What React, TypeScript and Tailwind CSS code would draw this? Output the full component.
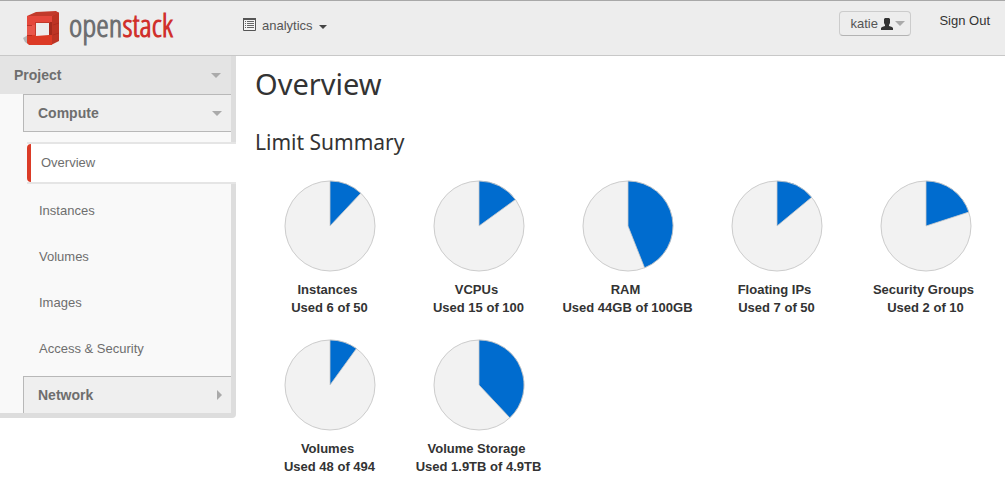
import React from "react";

type Quota = { name: string; used: string; fraction: number };

const quotas: Quota[] = [
  { name: "Instances", used: "Used 6 of 50", fraction: 0.12 },
  { name: "VCPUs", used: "Used 15 of 100", fraction: 0.15 },
  { name: "RAM", used: "Used 44GB of 100GB", fraction: 0.44 },
  { name: "Floating IPs", used: "Used 7 of 50", fraction: 0.14 },
  { name: "Security Groups", used: "Used 2 of 10", fraction: 0.2 },
  { name: "Volumes", used: "Used 48 of 494", fraction: 0.1 },
  { name: "Volume Storage", used: "Used 1.9TB of 4.9TB", fraction: 0.38 },
];

const links = ["Instances", "Volumes", "Images", "Access & Security"];

function Pie({ fraction }: { fraction: number }) {
  const cx = 75;
  const cy = 46;
  const r = 45;
  const angle = fraction * 2 * Math.PI;
  const x = cx + r * Math.sin(angle);
  const y = cy - r * Math.cos(angle);
  return (
    <svg className="block h-[92px] w-full" viewBox="0 0 145 92" aria-hidden="true">
      <circle cx={cx} cy={cy} r={r} fill="#f2f2f2" stroke="#ccc" />
      <path
        d={`M${cx} ${cy}V${cy - r}A${r} ${r} 0 ${fraction > 0.5 ? 1 : 0} 1 ${x} ${y}Z`}
        fill="#006ccf"
        stroke="#ccc"
        strokeWidth="0.8"
      />
    </svg>
  );
}

function DownArrow({ className }: { className: string }) {
  return (
    <svg className={className} viewBox="0 0 10 5" fill="currentColor" aria-hidden="true">
      <path d="M0 0H10L5 5Z" />
    </svg>
  );
}

function Logo() {
  return (
    <a href="#" className="flex items-start gap-2" aria-label="openstack">
      <svg className="h-9 w-[38px]" viewBox="0 0 38 36" aria-hidden="true">
        <path d="M0 28L5 25V34L2 32Z" fill="#b5b5b5" />
        <path d="M28 6L35 2L36 3V31L28 35Z" fill="#bd3424" />
        <path d="M4 6L13 2L33 1L36 3L29 6Z" fill="#c23a2b" />
        <path d="M4 6H29V15H4Z" fill="#e5473b" />
        <path d="M4 15H29V25H4Z" fill="#e9564a" />
        <path d="M4 25H29V35H6L4 33Z" fill="#dc3a25" />
        <path d="M26 12H29V25H26Z" fill="#a52a1d" />
        <path d="M12 12H27V13H13V25H12Z" fill="#c23a2b" />
        <path d="M13 13H26V25L13 26Z" fill="#ededed" />
        <path d="M4 15.5H9M4 25.5H9M30 15L36 13M30 25L36 23" fill="none" stroke="#a8281c" strokeOpacity="0.7" />
      </svg>
      <span className="font-['Open_Sans_Condensed_Light','Open_Sans_Condensed','Lato',sans-serif] text-[32px] leading-[30px] font-bold text-[#6d6f71]">
        open<span className="text-[#d0302b]">stack</span>
      </span>
    </a>
  );
}

export default function App() {
  return (
    <div className="min-h-screen bg-white font-['Liberation_Sans',Arial,sans-serif] text-[13px] leading-[18px] text-[#333]">
      <header className="flex h-14 items-start border-t border-b border-t-[#a8a8a8] border-b-[#c8c8c8] bg-[#ededed]">
        <div className="w-[243px] pt-[9px] pl-[23px]">
          <Logo />
        </div>
        <button type="button" className="mt-4 flex items-center text-[#555]">
          <svg className="mr-[6px] mb-[3px] h-[13px] w-[13px]" viewBox="0 0 13 13" aria-hidden="true">
            <path d="M.5 .5H12.5V12.5H.5Z" fill="#f4f4f4" stroke="#555" />
            <path d="M0 0H13V2H0Z" fill="#555" />
            <path d="M2 3.5H3M4 3.5H11M2 5.5H3M4 5.5H11M2 7.5H3M4 7.5H11M2 9.5H3M4 9.5H11" stroke="#666" />
          </svg>
          analytics
          <DownArrow className="mt-[2px] ml-[6px] h-1 w-2 text-[#444]" />
        </button>
        <button
          type="button"
          className="mt-[10px] mr-7 ml-auto flex h-[25px] w-[72px] items-center rounded border border-[#ccc] border-b-[#b3b3b3] pl-[10px] text-[#555]"
        >
          katie
          <svg className="ml-[3px] h-3 w-3" viewBox="0 0 12 12" fill="#333" aria-hidden="true">
            <path d="M4 0H8L9 1V5L8 7V8L11 9L12 10V12H0V10L1 9L4 8V7L3 5V1Z" />
          </svg>
          <DownArrow className="ml-[2px] h-[5px] w-[10px] text-[#aaa]" />
        </button>
        <a href="#" className="mt-[11px] mr-[15px] text-[#333]">
          Sign Out
        </a>
      </header>
      <div className="flex items-start">
        <nav className="w-[236px] shrink-0 rounded-br border-b-[5px] border-[#ddd] bg-[#f9f9f9] text-[#6e6e6e]">
          <div className="border-r-[5px] border-[#ddd]">
            <button
              type="button"
              className="flex h-[38px] w-full items-center justify-between bg-[#e4e4e4] pr-[10px] pl-[14px] text-sm font-bold"
            >
              Project
              <DownArrow className="h-[5px] w-[10px] text-[#aaa]" />
            </button>
            <div className="pb-[10px] pl-[23px]">
              <button
                type="button"
                className="flex h-[38px] w-full items-center justify-between border border-r-0 border-[#b8b8b8] bg-[#efefef] pr-[9px] pl-[14px] text-sm font-bold"
              >
                Compute
                <DownArrow className="h-[5px] w-[10px] text-[#aaa]" />
              </button>
            </div>
          </div>
          <a
            href="#"
            aria-current="page"
            className="ml-[27px] flex h-[42px] items-stretch border-y-2 border-[#e5e5e5] bg-white"
          >
            <span className="w-1 rounded-l bg-[#db3b27]" />
            <span className="self-center pl-[10px]">Overview</span>
          </a>
          <div className="border-r-[5px] border-[#ddd] pt-1 pl-[23px]">
            {links.map((link) => (
              <a key={link} href="#" className="flex h-[46px] items-center pl-4">
                {link}
              </a>
            ))}
            <button
              type="button"
              className="mt-1 flex h-[37px] w-full items-center justify-between border-t border-l border-[#b8b8b8] bg-[#efefef] pr-[9px] pl-[14px] text-sm font-bold"
            >
              Network
              <svg className="h-[10px] w-[5px]" viewBox="0 0 5 10" fill="#aaa" aria-hidden="true">
                <path d="M0 0V10L5 5Z" />
              </svg>
            </button>
          </div>
        </nav>
        <main className="min-w-0 flex-1 pt-2 pl-[19px] pb-2">
          <h1 className="font-['Noto_Sans',sans-serif] text-[29px] leading-10">Overview</h1>
          <h2 className="mt-5 font-['Noto_Sans',sans-serif] text-[21px] leading-9">Limit Summary</h2>
          <ul className="mt-5 flex flex-wrap gap-x-1 gap-y-[22px]">
            {quotas.map((quota) => (
              <li key={quota.name} className="w-[145px] text-center font-bold whitespace-nowrap">
                <Pie fraction={quota.fraction} />
                <div className="mt-[9px]">{quota.name}</div>
                <div className="pl-1">{quota.used}</div>
              </li>
            ))}
          </ul>
        </main>
      </div>
    </div>
  );
}
